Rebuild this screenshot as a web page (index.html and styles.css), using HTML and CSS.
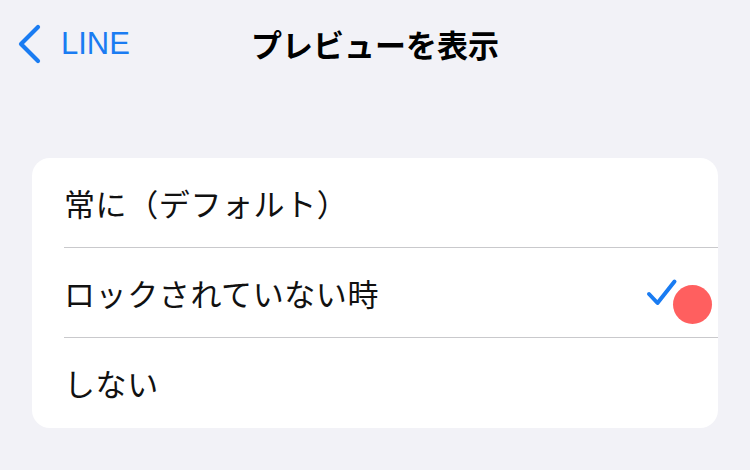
FILE: index.html
```html
<!DOCTYPE html>
<html lang="ja">
<head>
<meta charset="utf-8">
<link rel="stylesheet" href="styles.css">
</head>
<body>
<div class="screen">
  <header class="nav">
    <div class="back">
      <svg class="chev" width="26" height="40" viewBox="0 0 26 40">
        <path d="M21 3 L4 20 L21 37" fill="none" stroke="#1a7cf2" stroke-width="4.2" stroke-linecap="round" stroke-linejoin="round"/>
      </svg>
      <span class="back-label">LINE</span>
    </div>
    <h1 class="title">プレビューを表示</h1>
  </header>
  <div class="card">
    <div class="row"><span class="label">常に（デフォルト）</span></div>
    <div class="row selected">
      <span class="label">ロックされていない時</span>
      <svg class="check" width="32" height="30" viewBox="0 0 32 30">
        <path d="M3 16 L11.5 25 L28.5 3.5" fill="none" stroke="#1a7cf2" stroke-width="4" stroke-linecap="round" stroke-linejoin="round"/>
      </svg>
      <span class="dot"></span>
    </div>
    <div class="row"><span class="label">しない</span></div>
  </div>
</div>
</body>
</html>
```
FILE: styles.css
```css
html, body {
  margin: 0;
  padding: 0;
  background: #f2f2f7;
}
.screen {
  width: 750px;
  height: 470px;
  font-family: "Noto Sans CJK JP", "Noto Sans", sans-serif;
  color: #000;
}
.nav {
  position: relative;
  height: 88px;
  display: flex;
  align-items: center;
  justify-content: center;
}
.back {
  position: absolute;
  left: 17px;
  top: 24px;
  display: flex;
  align-items: center;
  gap: 18px;
  color: #1a7cf2;
}
.chev {
  display: block;
}
.back-label {
  font-family: "Liberation Sans", Arial, sans-serif;
  font-size: 31px;
  line-height: 40px;
}
.title {
  margin: 0;
  font-size: 31px;
  font-weight: 700;
  line-height: 40px;
  letter-spacing: 0;
}
.card {
  margin: 70px 32px 0;
  background: #fff;
  border-radius: 18px;
  overflow: hidden;
}
.row {
  position: relative;
  height: 89px;
  margin-left: 32px;
  padding-right: 40px;
  display: flex;
  align-items: center;
  justify-content: space-between;
  border-bottom: 1px solid #c9c9cc;
}
.row:last-child {
  border-bottom: none;
  height: 90px;
}
.label {
  font-size: 31px;
  line-height: 40px;
  letter-spacing: 0.6px;
  color: #111;
}
.check {
  display: block;
}
.dot {
  position: absolute;
  left: 609px;
  top: 37px;
  width: 39px;
  height: 39px;
  border-radius: 50%;
  background: #ff5f5f;
}
```
